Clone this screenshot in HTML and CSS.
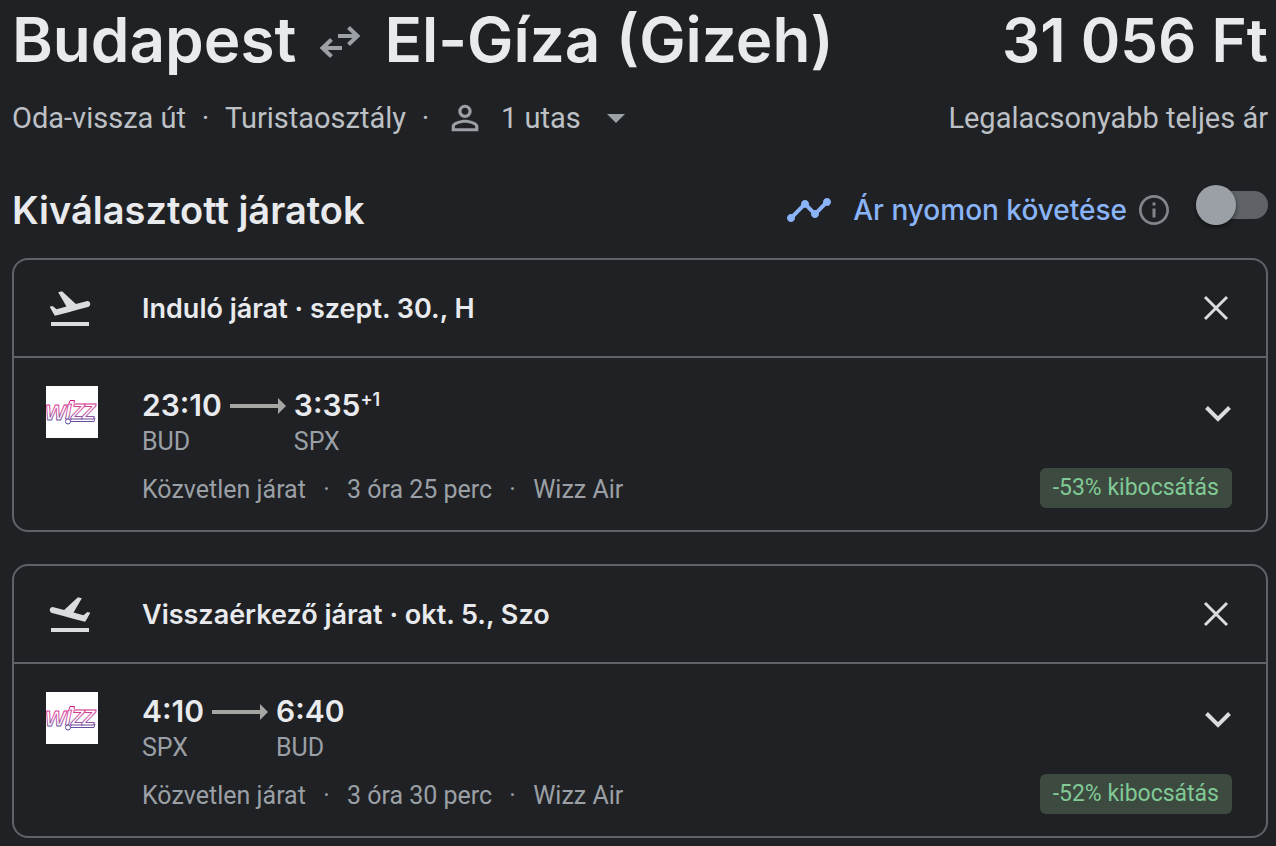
FILE: index.html
```html
<!DOCTYPE html>
<html lang="hu">
<head>
<meta charset="utf-8">
<meta name="viewport" content="width=device-width, initial-scale=1">
<title>Budapest – El-Gíza (Gizeh)</title>
<link rel="stylesheet" href="styles.css">
</head>
<body>
<svg class="defs" width="0" height="0" aria-hidden="true">
  <defs>
    <linearGradient id="wizz-ink" gradientUnits="userSpaceOnUse" x1="0" y1="14" x2="0" y2="38">
      <stop offset="0" stop-color="#d4147f"/>
      <stop offset="0.45" stop-color="#d45aa6"/>
      <stop offset="1" stop-color="#4a4a9c"/>
    </linearGradient>
    <symbol id="wizz" viewBox="0 0 52 52">
      <g fill="#fff" stroke="url(#wizz-ink)" stroke-width="1" stroke-linejoin="round">
        <path d="M24 35.500 26 32H49L48 35.500Z"/>
        <text class="wizz-text" x="-1" y="34">W</text>
        <text class="wizz-text" x="19" y="33">I</text>
        <text class="wizz-text" x="25" y="33">Z</text>
        <text class="wizz-text" x="36" y="33">Z</text>
        <path d="M23 17.500 24 14.500H28.500L28 17"/>
        <circle cx="22" cy="35.500" r="2.500"/>
      </g>
    </symbol>
    <symbol id="takeoff" viewBox="0 0 24 24">
      <path fill="currentColor" d="M2.500 19h19v2h-19zM22.070 9.640c-.21-.8-1.040-1.280-1.840-1.060L14.920 10l-6.900-6.430-1.930.51 4.140 7.170-4.970 1.330-1.970-1.540-1.450.39 1.820 3.160.77 1.330 1.600-.43 5.310-1.420 4.350-1.160L21 11.490c.81-.23 1.280-1.050 1.070-1.850z"/>
    </symbol>
    <symbol id="close" viewBox="0 0 48 48">
      <path d="M13 13 35 35M35 13 13 35" fill="none" stroke="currentColor" stroke-width="3"/>
    </symbol>
    <symbol id="chevron" viewBox="0 0 28 20">
      <path d="M2.500 3.500 14 15 25.500 3.500" fill="none" stroke="currentColor" stroke-width="4"/>
    </symbol>
    <symbol id="arrow" viewBox="0 0 56 16">
      <path d="M0 6H48V0L56 8 48 16V10H0Z" fill="#a5a5a3"/>
    </symbol>
  </defs>
</svg>

<main class="page">
  <header class="summary">
    <h1 class="title">
      <span>Budapest</span>
      <svg class="swap" viewBox="0 0 48 48" role="img" aria-label="oda-vissza">
        <path d="M22 18H42M32.500 9.500 41.500 18 32.500 26.500M26 30H6M15.500 21.500 6.500 30 15.500 38.500" fill="none" stroke="currentColor" stroke-width="4"/>
      </svg>
      <span>El-Gíza (Gizeh)</span>
    </h1>
    <div class="title price">31 056 Ft</div>
  </header>

  <div class="details">
    <div class="trip">
      <span>Oda-vissza út</span>
      <span class="dot">·</span>
      <span>Turistaosztály</span>
      <span class="dot">·</span>
      <label class="passengers">
        <svg class="person" viewBox="0 0 24 24" aria-hidden="true"><path fill="currentColor" d="M12 5.900c1.160 0 2.100.94 2.100 2.100s-.94 2.100-2.100 2.100S9.900 9.160 9.900 8s.94-2.100 2.100-2.100m0 9c2.970 0 6.100 1.460 6.100 2.100v1.100H5.900V17c0-.64 3.130-2.100 6.100-2.100M12 4C9.790 4 8 5.790 8 8s1.790 4 4 4 4-1.790 4-4-1.790-4-4-4zm0 9c-2.670 0-8 1.340-8 4v3h16v-3c0-2.660-5.330-4-8-4z"/></svg>
        <select class="select" aria-label="Utasok száma"><option>1 utas</option></select>
        <svg class="caret" viewBox="0 0 18 9" aria-hidden="true"><path fill="currentColor" d="M0 0H18L9 9Z"/></svg>
      </label>
    </div>
    <div>Legalacsonyabb teljes ár</div>
  </div>

  <div class="section-head">
    <h2 class="heading">Kiválasztott járatok</h2>
    <div class="tracking">
      <svg class="icon-48" viewBox="0 0 24 24" aria-hidden="true"><path fill="currentColor" d="M23 8c0 1.100-.9 2-2 2-.18 0-.35-.02-.51-.07l-3.560 3.550c.05.16.07.34.07.52 0 1.100-.9 2-2 2s-2-.9-2-2c0-.18.02-.36.07-.52l-2.550-2.550c-.16.05-.34.07-.52.07s-.36-.02-.52-.07l-4.550 4.560c.05.16.07.33.07.51 0 1.100-.9 2-2 2s-2-.9-2-2 .9-2 2-2c.18 0 .35.02.51.07l4.560-4.550C8.020 9.360 8 9.180 8 9c0-1.100.9-2 2-2s2 .9 2 2c0 .18-.02.36-.07.52l2.550 2.550c.16-.05.34-.07.52-.07s.36.02.52.07l3.550-3.560C19.020 8.350 19 8.180 19 8c0-1.100.9-2 2-2s2 .9 2 2z"/></svg>
      <label class="tracking-label" for="track">Ár nyomon követése</label>
      <button class="icon-button info" type="button" aria-label="Információ">
        <svg class="icon-36" viewBox="0 0 24 24"><path fill="currentColor" d="M11 7h2v2h-2zm0 4h2v6h-2zm1-9C6.480 2 2 6.480 2 12s4.480 10 10 10 10-4.480 10-10S17.520 2 12 2zm0 18.200c-4.500 0-8.200-3.700-8.200-8.200S7.500 3.800 12 3.800s8.200 3.700 8.200 8.200-3.700 8.200-8.200 8.200z"/></svg>
      </button>
      <input class="switch" id="track" type="checkbox" role="switch">
    </div>
  </div>

  <section class="card">
    <div class="card-head">
      <svg class="icon-48" aria-hidden="true"><use href="#takeoff"/></svg>
      <h3 class="card-title">Induló járat · szept. 30., H</h3>
      <button class="icon-button" type="button" aria-label="Eltávolítás"><svg class="icon-48"><use href="#close"/></svg></button>
    </div>
    <div class="card-body">
      <svg class="logo" role="img" aria-label="Wizz Air"><use href="#wizz"/></svg>
      <div class="flight">
        <div class="flight-row">
          <div class="route">
            <div><div class="time">23:10</div><div class="code">BUD</div></div>
            <svg class="arrow" aria-hidden="true"><use href="#arrow"/></svg>
            <div><div class="time">3:35<sup class="next-day">+1</sup></div><div class="code">SPX</div></div>
          </div>
          <button class="icon-button expand" type="button" aria-label="Részletek"><svg class="chevron"><use href="#chevron"/></svg></button>
        </div>
        <div class="flight-row">
          <div class="facts"><span>Közvetlen járat</span><span class="dot">·</span><span>3 óra 25 perc</span><span class="dot">·</span><span>Wizz Air</span></div>
          <div class="badge">-53% kibocsátás</div>
        </div>
      </div>
    </div>
  </section>

  <section class="card">
    <div class="card-head">
      <svg class="icon-48 mirrored" aria-hidden="true"><use href="#takeoff"/></svg>
      <h3 class="card-title">Visszaérkező járat · okt. 5., Szo</h3>
      <button class="icon-button" type="button" aria-label="Eltávolítás"><svg class="icon-48"><use href="#close"/></svg></button>
    </div>
    <div class="card-body">
      <svg class="logo" role="img" aria-label="Wizz Air"><use href="#wizz"/></svg>
      <div class="flight">
        <div class="flight-row">
          <div class="route">
            <div><div class="time">4:10</div><div class="code">SPX</div></div>
            <svg class="arrow" aria-hidden="true"><use href="#arrow"/></svg>
            <div><div class="time">6:40</div><div class="code">BUD</div></div>
          </div>
          <button class="icon-button expand" type="button" aria-label="Részletek"><svg class="chevron"><use href="#chevron"/></svg></button>
        </div>
        <div class="flight-row">
          <div class="facts"><span>Közvetlen járat</span><span class="dot">·</span><span>3 óra 30 perc</span><span class="dot">·</span><span>Wizz Air</span></div>
          <div class="badge">-52% kibocsátás</div>
        </div>
      </div>
    </div>
  </section>
</main>
</body>
</html>
```
FILE: styles.css
```css
* { box-sizing: border-box; }

body {
  margin: 0;
  background: #202124;
  color: #e8eaed;
  font-family: Roboto, "Liberation Sans", sans-serif;
}

h1, h2, h3 { margin: 0; }

svg { display: block; flex: none; }

.defs { position: absolute; }

.page { padding: 0 8px 8px 12px; }

.summary,
.details,
.section-head,
.flight-row {
  display: flex;
  align-items: center;
  justify-content: space-between;
}

.title,
.heading,
.tracking-label,
.card-title,
.time {
  font-family: Inter, Roboto, sans-serif;
  font-weight: 600;
}

.title {
  display: flex;
  align-items: center;
  gap: 20px;
  font-size: 62px;
  line-height: 80px;
  white-space: nowrap;
}

.price { font-size: 60px; }

.swap { width: 48px; height: 48px; margin-top: 4px; color: #9aa0a6; }

.details {
  height: 76px;
  color: #bdc1c6;
  font-size: 29px;
  white-space: nowrap;
}

.trip, .passengers { display: flex; align-items: center; }

.dot { width: 41px; text-align: center; }

.trip .dot { width: 39px; }

.person { width: 40px; height: 40px; color: #9aa0a6; }

.select {
  appearance: none;
  margin: 0 26px 0 16px;
  padding: 0;
  border: 0;
  background: none;
  color: inherit;
  font: inherit;
}

.caret { width: 18px; height: 9px; color: #9aa0a6; }

.section-head { height: 102px; padding-top: 6px; }

.heading { font-size: 38px; }

.tracking {
  display: flex;
  align-items: center;
  color: #8ab4f8;
}

.tracking-label { margin: 0 9px 0 20px; font-size: 28px; font-weight: 500; }

.icon-48 { width: 48px; height: 48px; }
.icon-36 { width: 36px; height: 36px; }
.mirrored { transform: scaleX(-1); }

.icon-button {
  padding: 0;
  border: 0;
  background: none;
  color: #dadce0;
  cursor: pointer;
}

.info { color: #80868b; }

.switch {
  appearance: none;
  display: flex;
  align-items: center;
  width: 72px;
  height: 28px;
  margin: 0 0 10px 24px;
  border-radius: 14px;
  background: #5f6368;
}

.switch::before {
  content: "";
  flex: none;
  width: 40px;
  height: 40px;
  border-radius: 50%;
  background: #9aa0a6;
  box-shadow: 0 2px 4px rgba(0, 0, 0, 0.5);
}

.card {
  border: 2px solid #5f6368;
  border-radius: 16px;
}

.card + .card { margin-top: 32px; }

.card-head {
  display: flex;
  align-items: center;
  height: 98px;
  padding: 0 26px 0 32px;
  border-bottom: 2px solid #5f6368;
  color: #dadce0;
}

.card-title {
  flex: 1;
  margin-left: 48px;
  color: #e8eaed;
  font-size: 27px;
}

.card-body {
  display: flex;
  gap: 44px;
  padding: 28px 34px 22px 32px;
}

.logo { width: 52px; height: 52px; background: #fff; }

.wizz-text { font: italic 700 22px "Liberation Sans", sans-serif; }

.flight {
  flex: 1;
  display: grid;
  gap: 8px;
}

.route { display: flex; gap: 8px; }

.time { font-size: 30px; line-height: 38px; }

.next-day {
  font-size: 18px;
  line-height: 0;
  vertical-align: 10px;
}

.arrow { width: 56px; height: 16px; margin-top: 12px; }

.expand { align-self: flex-start; padding-top: 18px; }

.chevron { width: 28px; height: 20px; }

.code,
.facts {
  color: #9aa0a6;
  font-size: 25px;
  line-height: 36px;
}

.facts { display: flex; padding-top: 4px; }

.badge {
  padding: 0 13px;
  border-radius: 6px;
  background: #3c4a40;
  color: #81c995;
  font-size: 23px;
  line-height: 40px;
}
```
